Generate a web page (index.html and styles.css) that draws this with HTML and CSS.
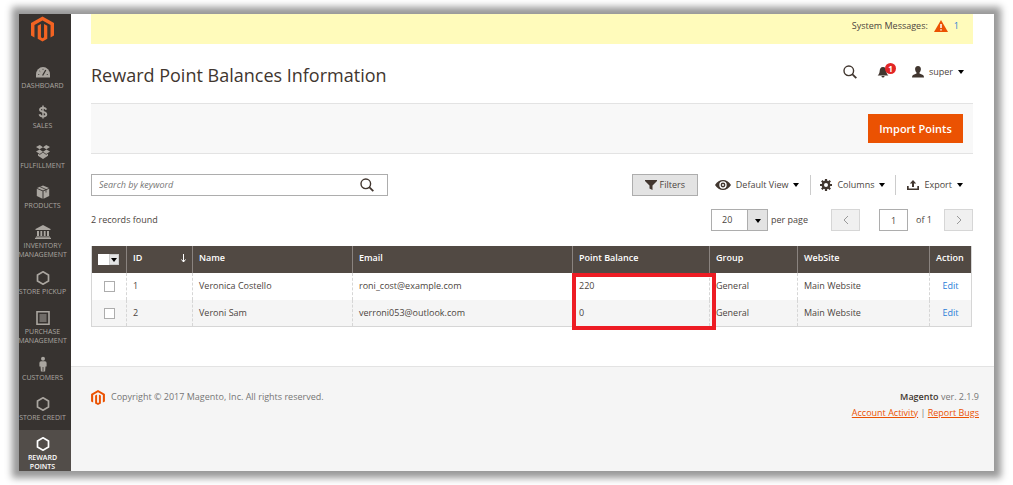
FILE: index.html
```html
<!DOCTYPE html>
<html lang="en">
<head>
<meta charset="utf-8">
<title>Reward Point Balances Information</title>
<link rel="stylesheet" href="styles.css">
</head>
<body>
<svg class="defs" aria-hidden="true">
  <symbol id="logo" viewBox="0 0 24 26"><path d="M12 0 24 6.8V19.8L20.4 21.8V8.8L12 4 3.6 8.8V21.8L0 19.8V6.8Z"/><path d="M7 9.5 10.4 7.7V21.5L12 22.6 13.6 21.5V7.7L17 9.5V23.2L12 26 7 23.2Z"/></symbol>
  <symbol id="hex" viewBox="0 0 14 14"><path d="M7 .8 12.500 3.900V10.100L7 13.200 1.500 10.100V3.900Z" fill="none" stroke="currentColor" stroke-width="1.700"/></symbol>
  <symbol id="search" viewBox="0 0 14 14"><g fill="none" stroke="currentColor" stroke-width="1.4"><circle cx="5.8" cy="5.8" r="4.8"/><path d="M9.2 9.2 13.3 13.2" stroke-width="1.8"/></g></symbol>
</svg>
<div class="frame">
  <aside class="sidebar">
    <a class="brand" href="#" aria-label="Magento"><svg><use href="#logo"/></svg></a>
    <nav class="menu">
      <a href="#"><svg viewBox="0 0 14 14"><path d="M0 12.500V9.500A7 7.500 0 0 1 14 9.500V12.500Z"/><path d="M6.6 10.500 9.8 5" stroke="#373330" stroke-width="1.300"/><path d="M2 9.500h1.300M3.300 5.800l1 .9M7 3.800v1.200M12 9.500h-1.300" stroke="#373330" stroke-width=".7"/></svg><span>DASHBOARD</span></a>
      <a href="#"><svg viewBox="0 0 14 14"><g fill="none" stroke="currentColor" stroke-width="1.9"><path d="M10.3 4.6C9.8 3.2 8.5 2.7 7 2.7 5.2 2.7 4 3.5 4 4.8 4 7.6 10.3 6.2 10.3 9.2 10.3 10.5 9 11.4 7 11.4 5.2 11.4 3.9 10.6 3.5 9.2"/><path d="M7 .5V13.5" stroke-width="1.5"/></g></svg><span>SALES</span></a>
      <a href="#"><svg viewBox="0 0 14 14"><path d="M3.8 0 7 2.2 3.6 4.3 0 2.1ZM10.2 0 7 2.2 10.4 4.3 14 2.1ZM3.6 4.5 7 6.7 3.8 9 0 6.6ZM10.4 4.5 7 6.7 10.2 9 14 6.6ZM7 7.6 10.1 9.8 12 8.8V10.8L7 14 2 10.8V8.8L3.9 9.8Z"/></svg><span>FULFILLMENT</span></a>
      <a href="#"><svg viewBox="0 0 14 14"><path d="M7 .5 13 3 7 5.6 1 3ZM.8 3.8 6.5 6.3V13.7L.8 11ZM13.2 3.8 7.5 6.3V13.7L13.2 11Z"/><path d="M4 1.7 10 4.5V7.5" fill="none" stroke="#373330" stroke-width=".8"/></svg><span>PRODUCTS</span></a>
      <a href="#"><svg class="wide" viewBox="0 0 16 14"><path d="M8 0 15.5 4V5H.5V4ZM2 6H4V11H2ZM5.4 6H7.2V11H5.4ZM8.8 6H10.6V11H8.8ZM12 6H14V11H12ZM1 11.4H15V12.4H1ZM0 12.8H16V14H0Z"/></svg><span>INVENTORY<br>MANAGEMENT</span></a>
      <a href="#"><svg><use href="#hex"/></svg><span>STORE PICKUP</span></a>
      <a href="#"><svg viewBox="0 0 14 14"><path d="M1 .8H13V13.2H1Z" fill="none" stroke="currentColor" stroke-width="1.6"/><path d="M3.500 4H10.500M3.500 6H10.500M3.500 8H10.500M3.500 10H10.500" stroke="currentColor" stroke-width="1"/></svg><span>PURCHASE<br>MANAGEMENT</span></a>
      <a href="#"><svg viewBox="0 0 14 14"><circle cx="7" cy="1.8" r="2"/><path d="M5 4.2H9Q10.6 4.4 10.6 6V9.6H9.5L9.1 14.5H4.9L4.5 9.6H3.4V6Q3.4 4.4 5 4.2Z"/><path d="M7 10V14" stroke="#373330" stroke-width=".8"/></svg><span>CUSTOMERS</span></a>
      <a href="#"><svg><use href="#hex"/></svg><span>STORE CREDIT</span></a>
      <a class="active" href="#"><svg><use href="#hex"/></svg><span>REWARD<br>POINTS</span></a>
    </nav>
  </aside>
  <div class="page">
    <div class="messages"><span>System Messages:</span><svg viewBox="0 0 14 12"><path d="M7 0 14 12H0Z" fill="#eb5202"/><path d="M7 4V8M7 9.2V10.6" stroke="#fff" stroke-width="1.5"/></svg><a href="#">1</a></div>
    <header class="header">
      <h1>Reward Point Balances Information</h1>
      <div class="account">
        <button class="plain" aria-label="Search"><svg class="icon"><use href="#search"/></svg></button>
        <button class="plain bell" aria-label="Notifications"><svg viewBox="0 0 12 12"><path d="M6 1C8.4 1 9.2 3 9.4 5.5 9.6 7.4 10.2 8.6 11.4 9.4H.6C1.8 8.6 2.4 7.4 2.6 5.5 2.8 3 3.6 1 6 1ZM4.4 10H7.6Q7.4 11.6 6 11.6 4.6 11.6 4.4 10Z"/></svg><span class="badge">1</span></button>
        <button class="plain user"><svg viewBox="0 0 12 12"><path d="M6 0C8 0 9 1.3 8.9 3.2 8.8 4.8 8.2 5.8 7.5 6.4V7.6L11 9Q12 9.5 12 11.5H0Q0 9.5 1 9L4.5 7.6V6.4C3.8 5.8 3.2 4.8 3.1 3.2 3 1.3 4 0 6 0Z"/></svg>super<i class="caret"></i></button>
      </div>
    </header>
    <div class="actions"><button class="primary">Import Points</button></div>
    <div class="toolbar">
      <form class="search"><input type="text" aria-label="Search by keyword" placeholder="Search by keyword"><button type="button" class="plain" aria-label="Search"><svg class="icon"><use href="#search"/></svg></button></form>
      <button class="filters"><svg viewBox="0 0 12 10"><path d="M0 0H12V1L7.5 5.5V10L4.5 8.6V5.5L0 1Z"/></svg>Filters</button>
      <button class="plain tool view"><svg viewBox="0 0 16 10"><path fill-rule="evenodd" d="M0 5Q3.2 0 8 0T16 5Q12.800 10 8 10T0 5ZM8 1.300A3.700 3.700 0 1 0 8 8.700 3.700 3.700 0 1 0 8 1.300ZM8 2.600A2.400 2.400 0 1 1 8 7.400 2.400 2.400 0 1 1 8 2.600Z"/><circle cx="8" cy="5" r="1" fill="#fff"/></svg>Default View<i class="caret"></i></button>
      <button class="plain tool columns"><svg viewBox="0 0 12 12"><circle cx="6" cy="6" r="3.200" fill="none" stroke="currentColor" stroke-width="2.400"/><path d="M6 0V2.500M6 9.500V12M0 6H2.500M9.500 6H12M1.800 1.800 3.500 3.500M8.500 8.500 10.200 10.200M1.800 10.200 3.500 8.500M8.500 3.500 10.200 1.800" stroke="currentColor" stroke-width="2.200"/></svg>Columns<i class="caret"></i></button>
      <button class="plain tool export"><svg viewBox="0 0 12 12"><path d="M6 1 9.200 4.500H7V8H5V4.500H2.800ZM0 7H1.700V9.400H10.300V7H12V11H0Z"/></svg>Export<i class="caret"></i></button>
    </div>
    <div class="paging">
      <span class="count">2 records found</span>
      <span class="size"><select id="size"><option>20</option></select><i class="caret"></i></span>
      <label class="per" for="size">per page</label>
      <button class="step" aria-label="Previous page" disabled><svg viewBox="0 0 6 10"><path d="M5 1 1 5 5 9"/></svg></button>
      <input class="current" id="current" type="text" value="1">
      <label class="of" for="current">of 1</label>
      <button class="step" aria-label="Next page" disabled><svg viewBox="0 0 6 10"><path d="M1 1 5 5 1 9"/></svg></button>
    </div>
    <table class="grid">
      <colgroup><col class="c-check"><col class="c-id"><col class="c-name"><col class="c-email"><col class="c-points"><col class="c-group"><col class="c-site"><col class="c-action"></colgroup>
      <thead><tr><th><span class="multi"><input type="checkbox" aria-label="Select all"><button aria-label="Selection options"><i class="caret"></i></button></span></th><th><span class="sorted">ID<svg viewBox="0 0 5 9"><path d="M2.500 0V8M.5 5.500 2.500 8 4.500 5.500"/></svg></span></th><th>Name</th><th>Email</th><th>Point Balance</th><th>Group</th><th>WebSite</th><th>Action</th></tr></thead>
      <tbody>
        <tr><td><input type="checkbox" aria-label="Select 1"></td><td>1</td><td>Veronica Costello</td><td>roni_cost@example.com</td><td class="marked">220<span class="marker"></span></td><td>General</td><td>Main Website</td><td><a href="#">Edit</a></td></tr>
        <tr><td><input type="checkbox" aria-label="Select 2"></td><td>2</td><td>Veroni Sam</td><td>verroni053@outlook.com</td><td>0</td><td>General</td><td>Main Website</td><td><a href="#">Edit</a></td></tr>
      </tbody>
    </table>
    <footer class="footer">
      <svg class="mark"><use href="#logo"/></svg>
      <span class="copy">Copyright © 2017 Magento, Inc. All rights reserved.</span>
      <div class="legal"><p><strong>Magento</strong> ver. 2.1.9</p><p><a href="#">Account Activity</a> | <a href="#">Report Bugs</a></p></div>
    </footer>
  </div>
</div>
</body>
</html>
```
FILE: styles.css
```css
* { box-sizing: border-box; }
body { margin: 0; padding: 14px 19px; min-height: 100vh; background: #fff; color: #4c4540; font: 9px/14px "Open Sans", "Noto Sans", sans-serif; }
button, input, select { font: inherit; color: inherit; margin: 0; padding: 0; border-radius: 0; }
svg { display: block; flex: none; fill: currentColor; overflow: visible; }
a { color: #2a80d8; text-decoration: none; }
.defs { position: absolute; width: 0; height: 0; }
.frame { display: flex; min-height: calc(100vh - 28px); background: #fff; box-shadow: 0 0 7px 7px #999; }
.sidebar { width: 52px; flex: none; background: #373330; color: #aaa6a0; }
.brand { display: block; height: 44px; padding: 2px 5px 0 0; color: #f26322; }
.brand svg { width: 23px; height: 26px; margin: 0 auto; }
.menu a { display: flex; flex-direction: column; align-items: center; gap: 2px; min-height: 40px; padding: 7px 5px 5px 0; color: #aaa6a0; font-size: 7px; line-height: 9px; text-align: center; white-space: nowrap; }
.menu svg { width: 14px; height: 14px; }
.menu svg.wide { width: 16px; }
.menu .active { padding-bottom: 0; background: #524d49; color: #fff; font-weight: 600; }
.page { flex: 1; min-width: 0; display: flex; flex-direction: column; padding-left: 20px; }
.page > * { margin-right: 21px; }
.messages { display: flex; align-items: center; justify-content: flex-end; height: 30px; padding: 0 14px 6px 0; background: #fffbbb; }
.messages svg { width: 14px; height: 12px; margin: 0 6px; }
.header { display: flex; align-items: center; height: 59px; }
h1 { flex: 1; margin: 0; padding-top: 2px; color: #41362f; font-size: 18px; line-height: 24px; font-weight: 400; }
.account { display: flex; align-items: center; padding: 0 9px 4px 0; }
.plain { display: flex; align-items: center; border: 0; background: none; }
.plain svg, .filters svg { color: #41362f; }
.icon { width: 14px; height: 14px; }
.bell { position: relative; margin: 0 23px 0 20px; }
.bell svg, .user svg { width: 12px; height: 12px; }
.badge { position: absolute; left: 8px; top: -3px; width: 11px; height: 11px; border-radius: 50%; background: #e22626; color: #fff; font-size: 8px; line-height: 11px; font-weight: 700; }
.user { gap: 5px; }
.caret { width: 0; height: 0; border: 3px solid transparent; border-top: 4px solid #000; border-bottom: 0; }
.actions { display: flex; align-items: center; justify-content: flex-end; height: 51px; padding-right: 10px; border: solid #e3e3e3; border-width: 1px 0; background: #f8f8f8; }
.primary { width: 95px; height: 29px; border: 0; background: #eb5202; color: #fff; font-size: 11px; font-weight: 600; }
.toolbar { display: flex; align-items: center; height: 22px; margin-top: 20px; }
.search { display: flex; width: 297px; height: 22px; margin-right: auto; padding-right: 13px; border: 1px solid #adadad; }
.search input { flex: 1; min-width: 0; padding-left: 7px; border: 0; background: none; font-style: italic; }
.search input::placeholder { color: #757575; opacity: 1; }
.filters { display: flex; align-items: center; justify-content: center; gap: 3px; width: 66px; height: 22px; border: 1px solid #adadad; background: #e3e3e3; font-weight: 500; }
.filters svg { width: 12px; height: 10px; }
.tool { height: 20px; gap: 5px; padding: 0 10px 0 11px; }
.tool svg { width: 12px; height: 12px; }
.tool + .tool { border-left: 1px solid #ccc; }
.columns { padding-left: 9px; }
.view { padding: 0 11px 0 17px; }
.tool.view svg { width: 16px; height: 10px; }
.paging { display: flex; align-items: center; height: 22px; margin-top: 13px; }
.count { margin-right: auto; }
.size { position: relative; display: flex; width: 57px; height: 22px; }
.size select { width: 100%; appearance: none; padding-left: 10px; border: 1px solid #adadad; background: linear-gradient(#adadad, #adadad) right 19px top / 1px 100% no-repeat, linear-gradient(#e3e3e3, #e3e3e3) right / 19px 100% no-repeat, #fff; }
.size .caret { position: absolute; right: 7px; top: 10px; pointer-events: none; }
.per { width: 63px; padding-left: 3px; }
.step { display: flex; align-items: center; justify-content: center; width: 29px; height: 22px; border: 1px solid #d6d6d6; background: #f0f0f0; color: #999; }
.step svg { width: 6px; height: 10px; fill: none; stroke: currentColor; }
.current { width: 29px; height: 22px; margin-left: 19px; border: 1px solid #adadad; text-align: center; }
.of { width: 36px; padding-left: 8px; }
.grid { table-layout: fixed; width: calc(100% - 22px); margin-top: 15px; border-collapse: separate; border-spacing: 0; border: solid #d6d6d6; border-width: 0 1px 1px; }
.c-check { width: 34px; }
.c-id { width: 66px; }
.c-name { width: 160px; }
.c-points { width: 137px; }
.c-group { width: 88px; }
.c-site { width: 132px; }
.c-action { width: 42px; }
.grid th { height: 27px; padding: 0 6px 3px; background: #514943; border-left: 1px solid #8a837f; color: #fff; font-weight: 600; text-align: left; white-space: nowrap; }
.grid td { height: 27px; padding: 0 6px 1px; border-left: 1px dashed #d6d6d6; }
.grid tbody tr + tr td { height: 26px; background: #f5f5f5; }
.grid th:first-child, .grid td:first-child { padding-bottom: 0; border-left: 0; text-align: center; }
.grid td:last-child { text-align: center; }
.grid input { display: block; width: 11px; height: 11px; margin: 0 auto; appearance: none; border: 1px solid #adadad; background: #fff; }
.multi { display: flex; width: 21px; height: 11px; }
.grid .multi input { margin: 0; border: 0; }
.multi button { display: flex; align-items: center; justify-content: center; width: 10px; border: 1px solid #ccc; background: #e3e3e3; }
.multi .caret { flex: none; }
.sorted { display: flex; align-items: center; justify-content: space-between; }
.sorted svg { width: 5px; height: 9px; fill: none; stroke: currentColor; }
.marked { position: relative; }
.marker { position: absolute; left: -1px; right: -7px; top: 0; height: 57px; border: 4px solid #ed1c24; z-index: 1; }
.page > .footer { flex: 1; display: flex; align-items: flex-start; margin: 39px 0 0 -20px; padding: 23px 15px 20px 20px; border-top: 1px solid #e3e3e3; background: #f5f5f5; color: #757575; }
.mark { width: 14px; height: 15px; color: #eb5202; }
.copy { flex: 1; padding-left: 6px; }
.legal { text-align: right; }
.legal p { margin: 0 0 2px; }
.legal strong { color: #41362f; font-weight: 600; }
.legal a { color: #eb5202; text-decoration: underline; }
```
